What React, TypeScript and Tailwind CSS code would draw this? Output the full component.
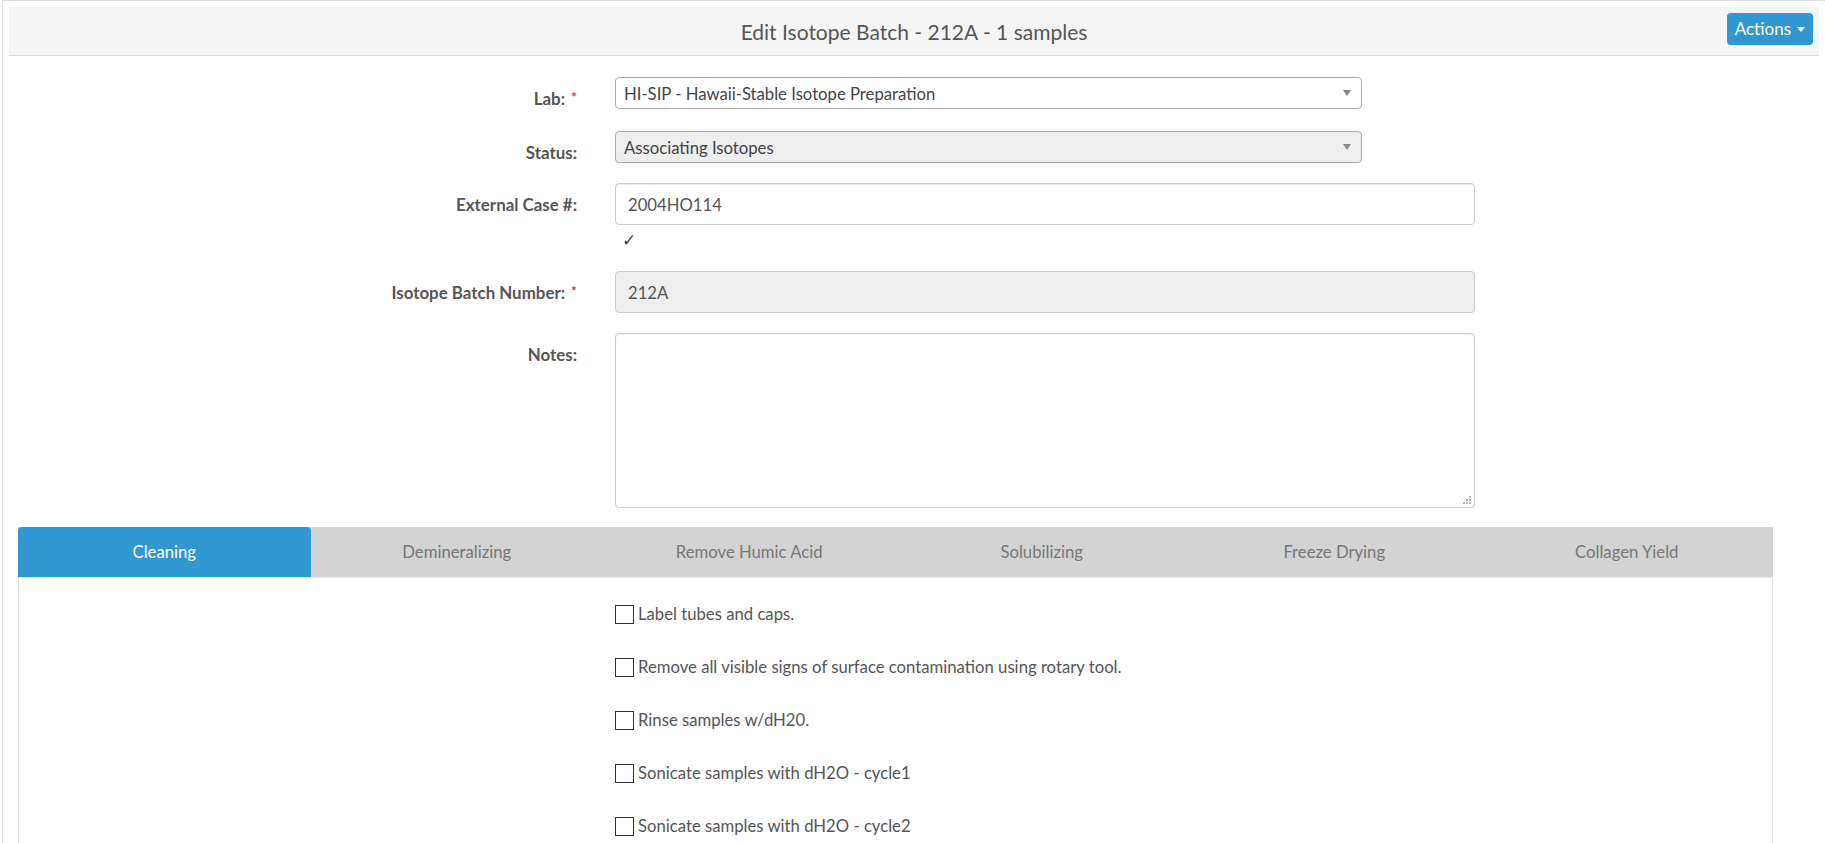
import React from "react";

const tabs = ["Cleaning", "Demineralizing", "Remove Humic Acid", "Solubilizing", "Freeze Drying", "Collagen Yield"];

const steps = [
    "Label tubes and caps.",
    "Remove all visible signs of surface contamination using rotary tool.",
    "Rinse samples w/dH20.",
    "Sonicate samples with dH2O - cycle1",
    "Sonicate samples with dH2O - cycle2",
];

const Required = () => <span className="ml-[6px] align-top text-[14px] leading-[18px] text-[#e3342f]">*</span>;

const Label: React.FC<{ text: string; required?: boolean }> = ({ text, required }) => (
    <div className="w-[568px] shrink-0 pt-[11px] text-right text-[16.9px] font-bold leading-[22px] text-[#555]">
        {text}
        {required && <Required />}
    </div>
);

const Caret = () => (
    <span className="absolute right-[10px] top-1/2 -translate-y-1/2 h-0 w-0 border-x-[4px] border-t-[6px] border-x-transparent border-t-[#888]" />
);

const App: React.FC = () => {
    return (
        <div className="min-h-screen bg-white pl-[2px] font-['Lato','Open_Sans',sans-serif]">
            <div className="min-h-screen border-l border-t border-[#dedede] px-[6px] pt-[6px]">
                {/* header */}
                <div className="relative flex h-[49px] items-center justify-center border-b border-[#dadada] bg-[#f5f5f5]">
                    <h1 className="pt-[2px] text-[21px] text-[#555]">Edit Isotope Batch - 212A - 1 samples</h1>
                    <button className="absolute right-[6px] top-[6px] flex h-[32px] items-center gap-[6px] rounded-[4px] bg-[#3097d1] px-[8px] text-[17px] text-white">
                        Actions
                        <span className="h-0 w-0 border-x-[4px] border-t-[5px] border-x-transparent border-t-white" />
                    </button>
                </div>

                {/* form */}
                <form className="mt-[21px]">
                    <div className="flex">
                        <Label text="Lab:" required />
                        <div className="relative ml-[38px] flex h-[32px] w-[747px] items-center rounded-[4px] border border-[#aaa] bg-white px-[8px] pt-[3px] text-[16.7px] text-[#444]">
                            HI-SIP - Hawaii-Stable Isotope Preparation
                            <Caret />
                        </div>
                    </div>

                    <div className="mt-[21px] flex">
                        <Label text="Status:" />
                        <div className="relative ml-[38px] flex h-[32px] w-[747px] items-center rounded-[4px] border border-[#aaa] bg-[#eee] px-[8px] pt-[3px] text-[16.7px] text-[#444]">
                            Associating Isotopes
                            <Caret />
                        </div>
                    </div>

                    <div className="mt-[19px] flex">
                        <Label text="External Case #:" />
                        <div className="ml-[38px]">
                            <div className="flex h-[42px] w-[860px] items-center rounded-[4px] border border-[#ccc] bg-white px-[12px] pt-[3px] text-[16.7px] text-[#555] shadow-[inset_0_1px_1px_rgba(0,0,0,0.075)]">
                                2004HO114
                            </div>
                            <div className="mt-[3px] pl-[7px] text-[17px] leading-[24px] text-[#444]">✓</div>
                        </div>
                    </div>

                    <div className="mt-[19px] flex">
                        <Label text="Isotope Batch Number:" required />
                        <div className="ml-[38px] flex h-[42px] w-[860px] items-center rounded-[4px] border border-[#ccc] bg-[#eee] px-[12px] pt-[3px] text-[16.7px] text-[#555]">
                            212A
                        </div>
                    </div>

                    <div className="mt-[20px] flex">
                        <Label text="Notes:" />
                        <div className="relative ml-[38px]">
                            <textarea
                                className="block h-[175px] w-[860px] resize-none rounded-[4px] border border-[#ccc] bg-white px-[12px] py-[6px] text-[16.7px] text-[#555] shadow-[inset_0_1px_1px_rgba(0,0,0,0.075)] outline-none"
                                defaultValue=""
                            />
                            <svg className="absolute bottom-[3px] right-[3px]" width="9" height="9" viewBox="0 0 9 9" fill="#b5b5b5">
                                <rect x="6" y="0" width="2" height="2" />
                                <rect x="3" y="3" width="2" height="2" />
                                <rect x="6" y="3" width="2" height="2" />
                                <rect x="0" y="6" width="2" height="2" />
                                <rect x="3" y="6" width="2" height="2" />
                                <rect x="6" y="6" width="2" height="2" />
                            </svg>
                        </div>
                    </div>
                </form>

                {/* tabs */}
                <div className="ml-[9px] mr-[46px] mt-[19px]">
                    <div className="grid grid-cols-6 bg-[#d3d3d3]">
                        {tabs.map((t, i) => (
                            <div
                                key={t}
                                className={
                                    i === 0
                                        ? "flex h-[50px] items-center justify-center rounded-t-[4px] bg-[#3097d1] pt-[2px] text-[16.7px] text-white"
                                        : "flex h-[50px] items-center justify-center pt-[2px] text-[16.7px] text-[#777]"
                                }
                            >
                                {t}
                            </div>
                        ))}
                    </div>
                    <div className="border-x border-t border-[#e6e6e6] bg-white pb-[40px] pl-[596px] pt-[10px]">
                        {steps.map((s) => (
                            <label key={s} className="flex h-[53px] items-center text-[16.7px] text-[#555]">
                                <span className="h-[19px] w-[19px] shrink-0 border-[1.5px] border-[#333] bg-white" />
                                <span className="ml-[4px]">{s}</span>
                            </label>
                        ))}
                    </div>
                </div>
            </div>
        </div>
    );
};

export default App;
